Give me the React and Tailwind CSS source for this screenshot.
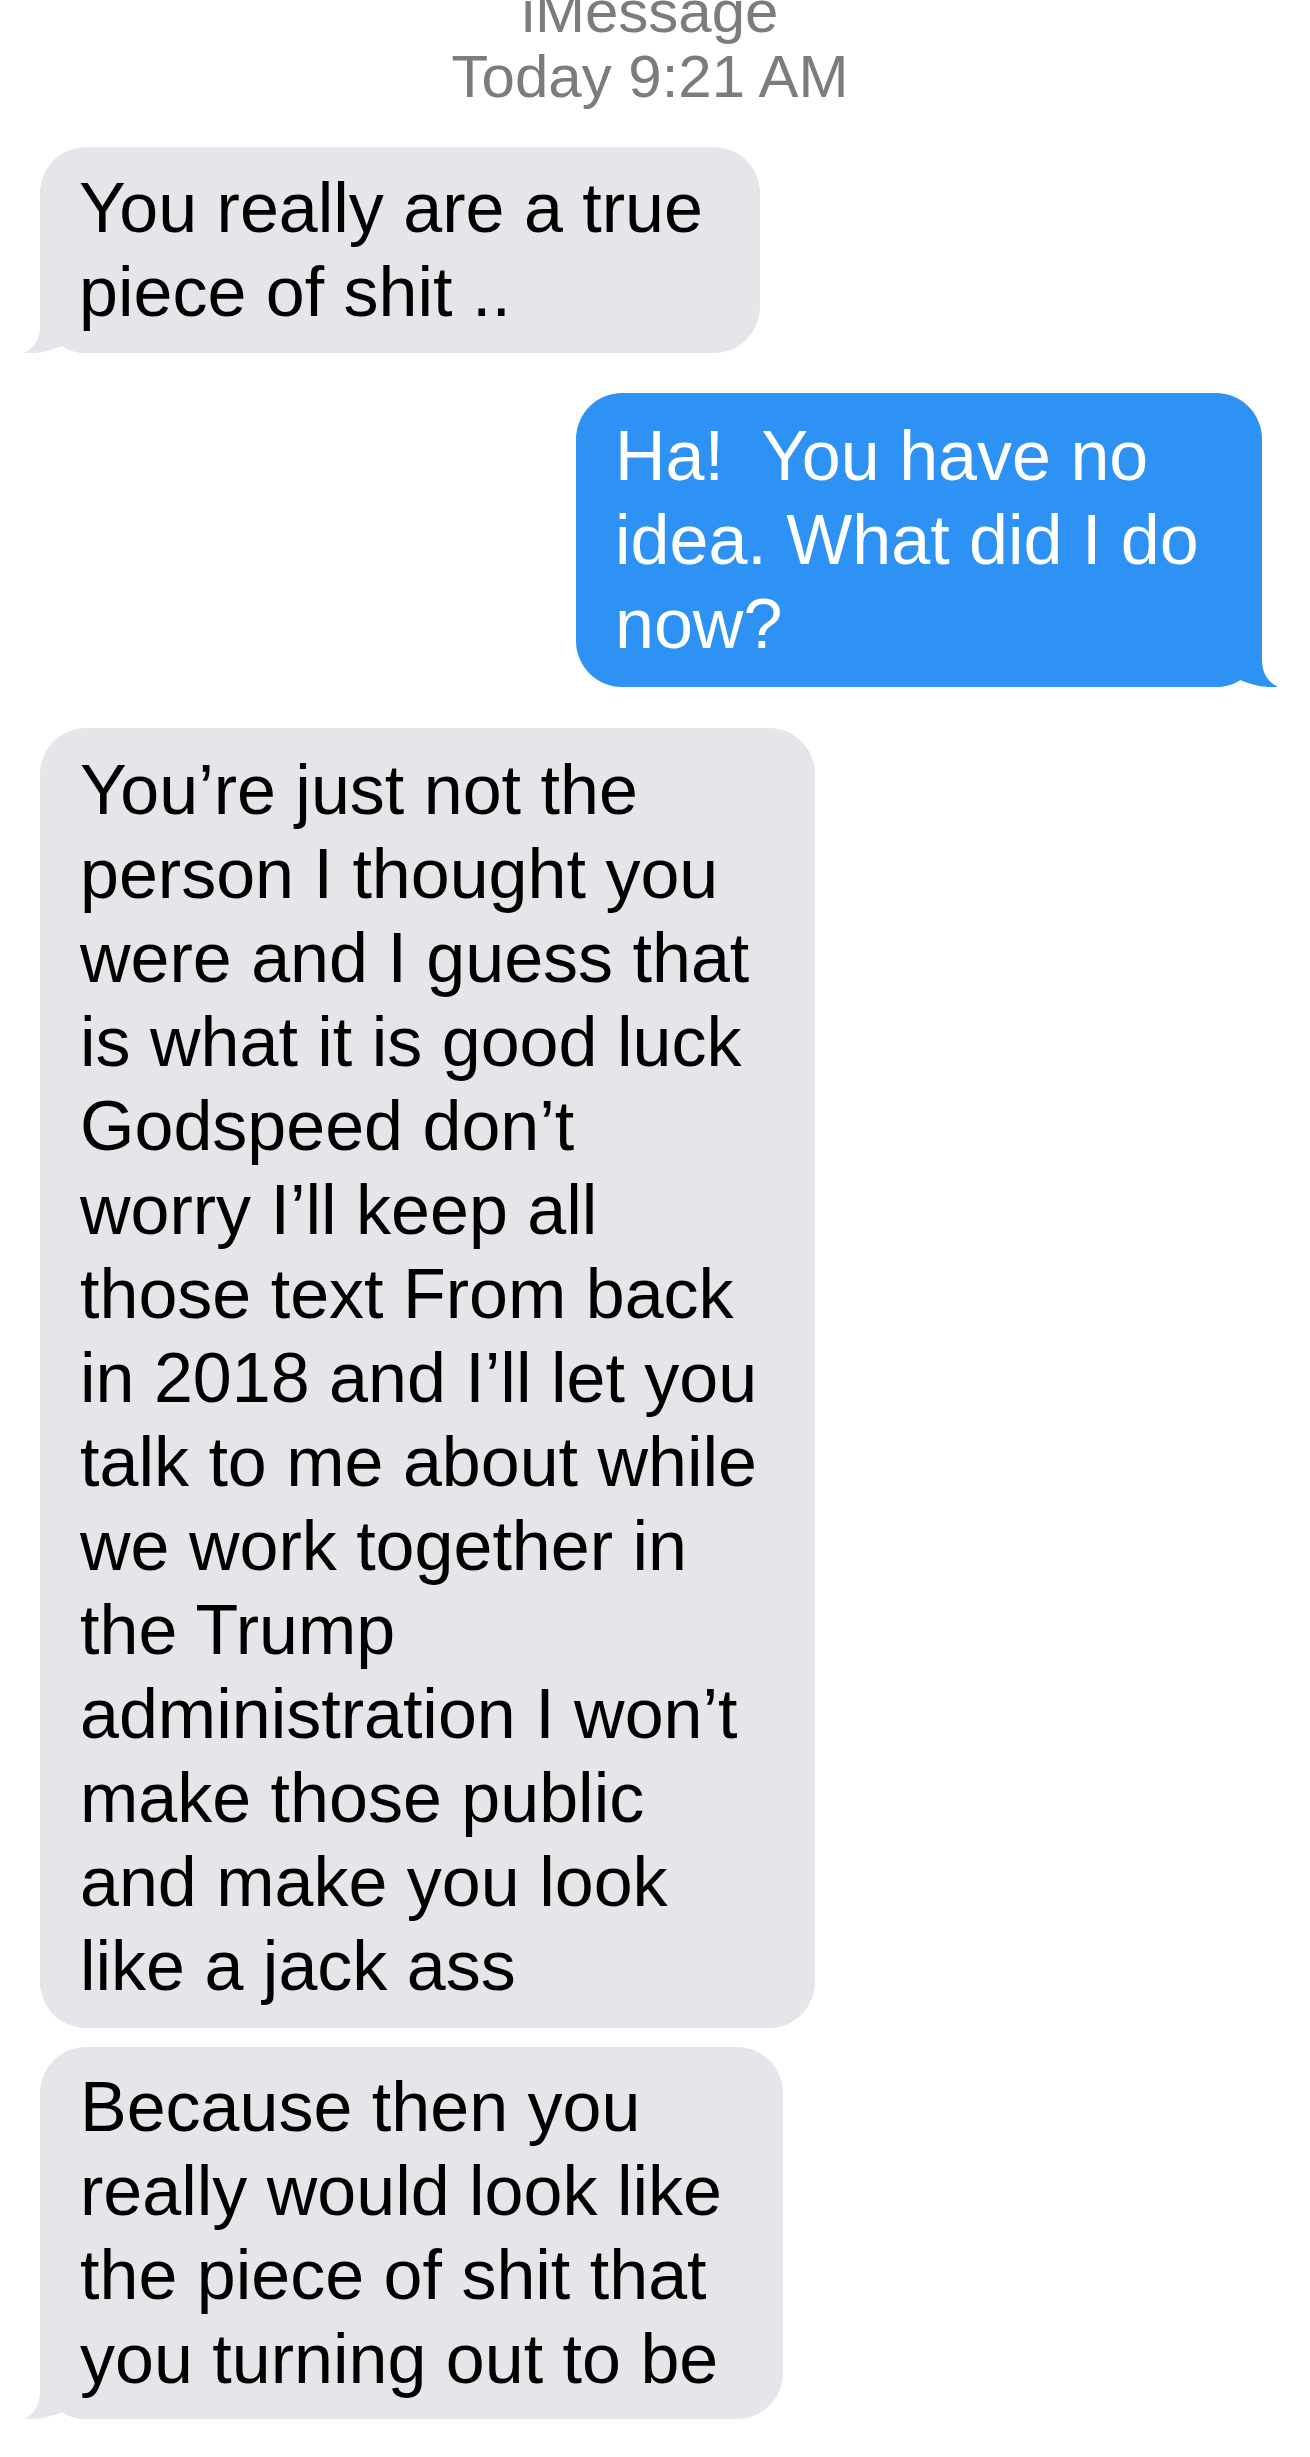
import React from "react";

const FONT = { fontFamily: '"Liberation Sans", Arial, Helvetica, sans-serif' };

function LeftTail() {
  return (
    <svg
      className="absolute bottom-0 left-[-17px]"
      width="67"
      height="56"
      viewBox="0 0 67 56"
    >
      <path
        d="M17 0 L17 29 C17 42 11 51 1 56 C14 57 28 54 39 49 C45 53 52 56 67 56 L67 0 Z"
        fill="#e6e6ea"
      />
    </svg>
  );
}

function RightTail() {
  return (
    <svg
      className="absolute bottom-0 right-[-17px]"
      width="67"
      height="56"
      viewBox="0 0 67 56"
    >
      <path
        d="M50 0 L50 29 C50 42 56 51 66 56 C53 57 39 54 28 49 C22 53 15 56 0 56 L0 0 Z"
        fill="#2d92f4"
      />
    </svg>
  );
}

function Lines({ lines }) {
  return lines.map((l, i) => (
    <div key={i} className="whitespace-pre">
      {l}
    </div>
  ));
}

export default function App() {
  return (
    <div className="min-h-screen w-full bg-white overflow-hidden" style={FONT}>
      <div className="flex flex-col">
        <div className="mt-[-21px] pr-[10px] text-center text-[60px] leading-[65px] text-[#7b7b80]">
          <div>iMessage</div>
          <div>Today 9:21 AM</div>
        </div>

        <div className="relative ml-[40px] mt-[38px] w-[720px] rounded-[46px] bg-[#e6e6ea] py-[19px] pl-[39px] text-[70px] leading-[84px] text-black">
          <LeftTail />
          <div className="relative">
            <Lines lines={["You really are a true", "piece of shit .."]} />
          </div>
        </div>

        <div className="relative mr-[48px] mt-[40px] w-[686px] self-end rounded-[46px] bg-[#2d92f4] py-[21px] pl-[39px] text-[70px] leading-[84px] text-white">
          <RightTail />
          <div className="relative">
            <Lines lines={["Ha!  You have no", "idea. What did I do", "now?"]} />
          </div>
        </div>

        <div className="relative ml-[40px] mt-[41px] w-[775px] rounded-[46px] bg-[#e6e6ea] py-[20px] pl-[40px] text-[70px] leading-[84px] text-black">
          <Lines
            lines={[
              "You\u2019re just not the",
              "person I thought you",
              "were and I guess that",
              "is what it is good luck",
              "Godspeed don\u2019t",
              "worry I\u2019ll keep all",
              "those text From back",
              "in 2018 and I\u2019ll let you",
              "talk to me about while",
              "we work together in",
              "the Trump",
              "administration I won\u2019t",
              "make those public",
              "and make you look",
              "like a jack ass",
            ]}
          />
        </div>

        <div className="relative ml-[40px] mt-[19px] w-[743px] rounded-[46px] bg-[#e6e6ea] py-[18px] pl-[40px] text-[70px] leading-[84px] text-black">
          <LeftTail />
          <div className="relative">
            <Lines
              lines={[
                "Because then you",
                "really would look like",
                "the piece of shit that",
                "you turning out to be",
              ]}
            />
          </div>
        </div>
      </div>
    </div>
  );
}
